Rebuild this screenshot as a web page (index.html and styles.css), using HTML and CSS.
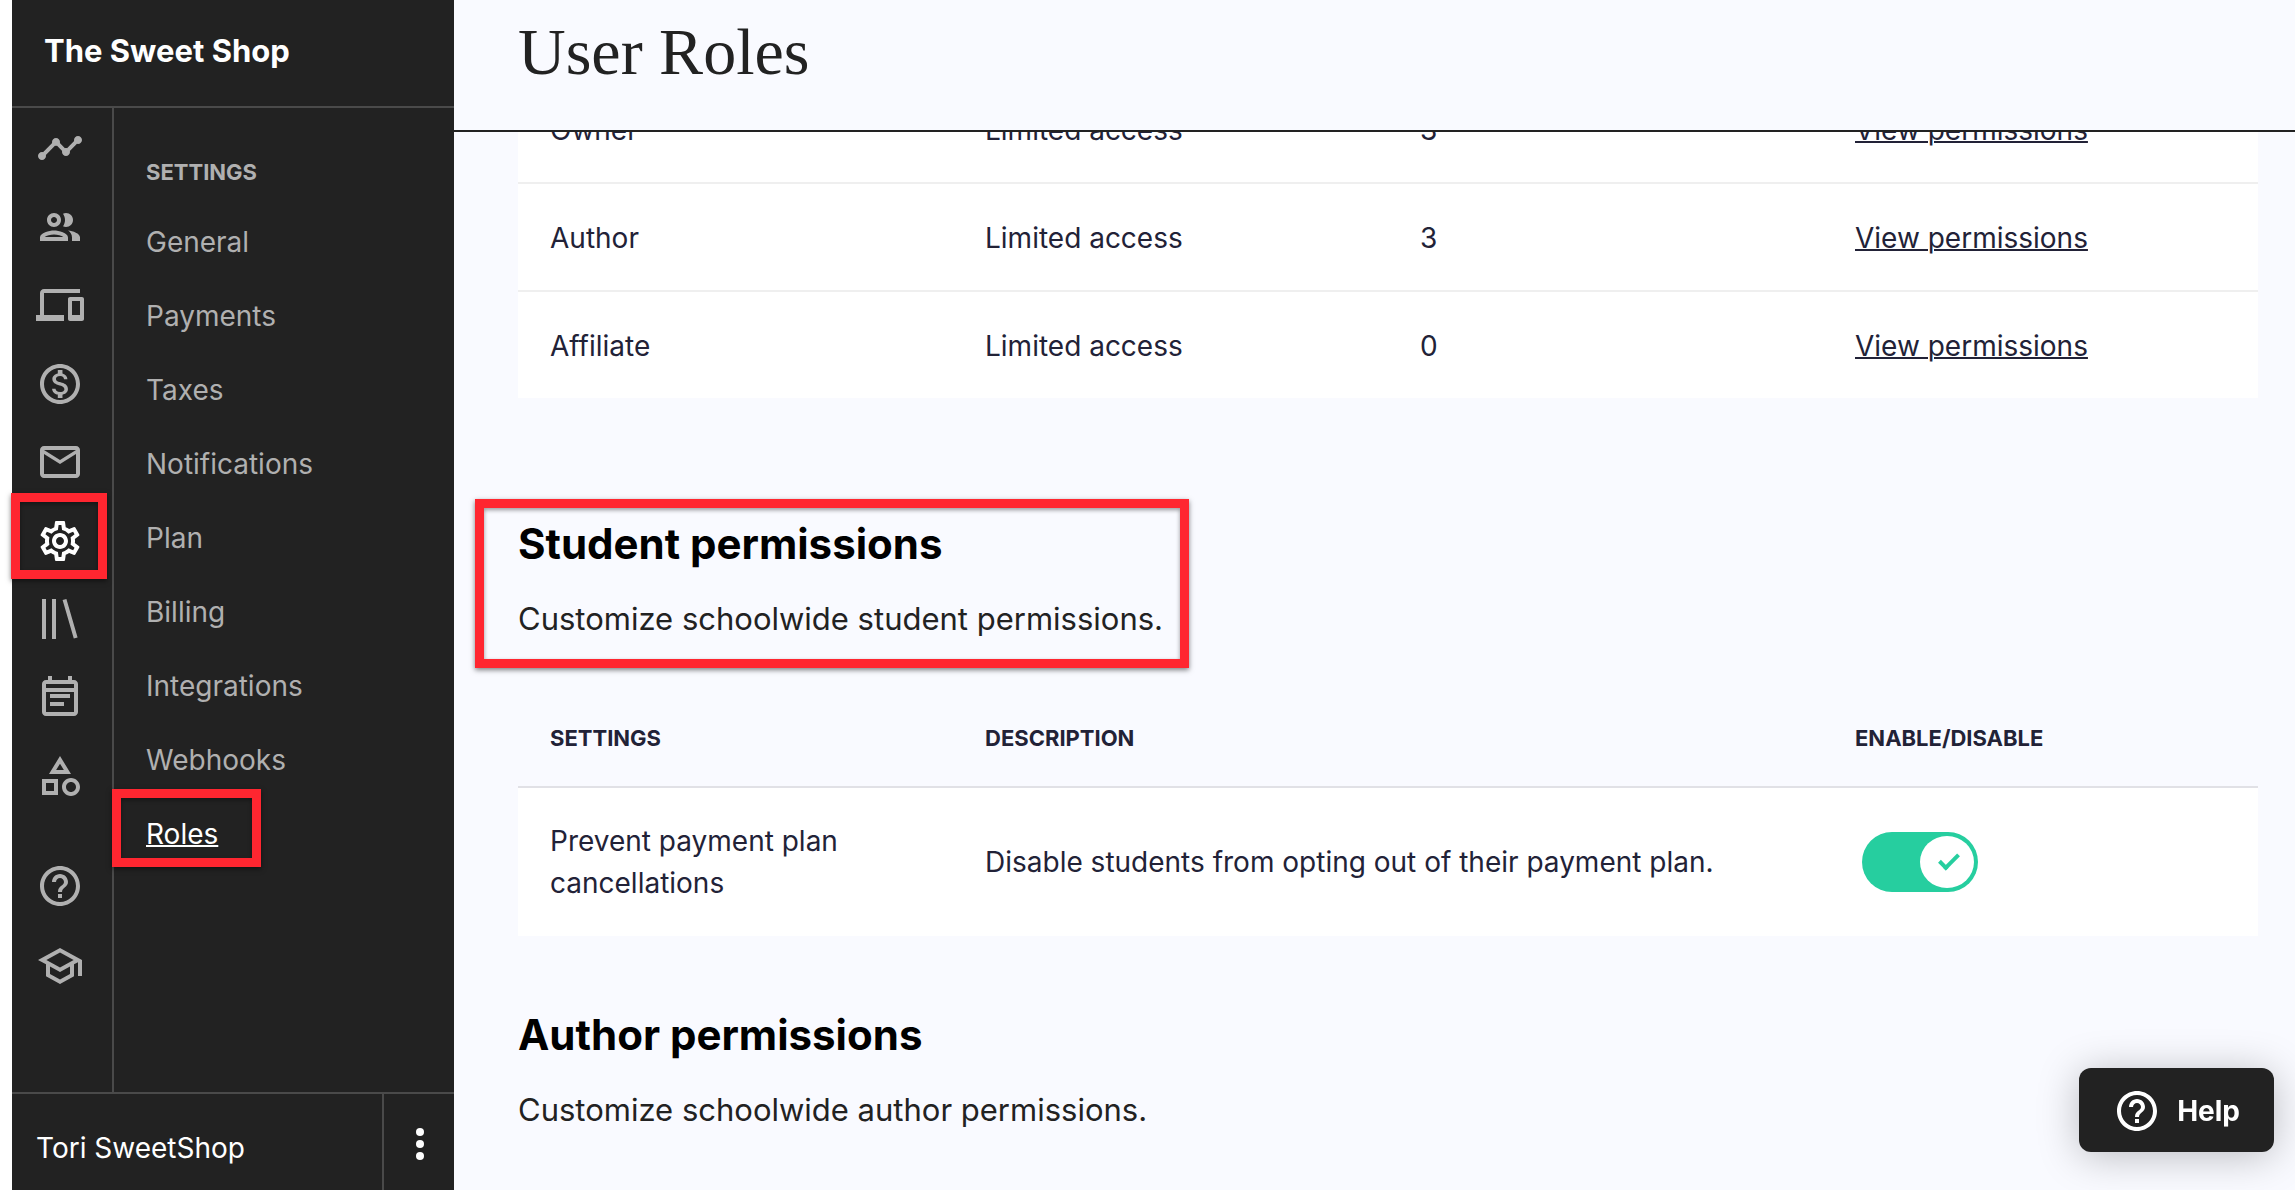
FILE: index.html
```html
<!DOCTYPE html>
<html lang="en">
<head>
    <meta charset="UTF-8">
    <meta name="viewport" content="width=device-width, initial-scale=1.0">
    <title>The Sweet Shop - User Roles</title>
    <link rel="stylesheet" href="styles.css">
</head>
<body>
    <aside class="sidebar">
        <div class="school-name">The Sweet Shop</div>
        <div class="sidebar-body">
            <nav class="rail" aria-label="Main">
                <div class="rail-main">
                    <a href="#" aria-label="Dashboard"><svg viewBox="0 0 24 24"><path d="M23 8c0 1.100-.9 2-2 2a1.700 1.700 0 0 1-.51-.07l-3.560 3.550c.05.16.07.34.07.52 0 1.100-.9 2-2 2s-2-.9-2-2c0-.18.02-.36.07-.52l-2.550-2.550c-.16.05-.34.07-.52.07s-.36-.02-.52-.07l-4.550 4.560c.05.16.07.33.07.51 0 1.100-.9 2-2 2s-2-.9-2-2 .9-2 2-2c.18 0 .35.02.51.07l4.560-4.550C8.020 9.360 8 9.180 8 9c0-1.100.9-2 2-2s2 .9 2 2c0 .18-.02.36-.07.52l2.550 2.550c.16-.05.34-.07.52-.07s.36.02.52.07l3.550-3.560A1.700 1.700 0 0 1 19 8c0-1.100.9-2 2-2s2 .9 2 2z"/></svg></a>
                    <a href="#" aria-label="Users"><svg viewBox="0 0 24 24"><path d="M9 13.750c-2.340 0-7 1.170-7 3.500V19h14v-1.750c0-2.330-4.660-3.500-7-3.500zM4.340 17c.84-.58 2.870-1.250 4.660-1.250s3.820.67 4.660 1.250H4.340zM9 12c1.930 0 3.500-1.570 3.500-3.500S10.930 5 9 5 5.500 6.570 5.500 8.500 7.070 12 9 12zm0-5c.83 0 1.500.67 1.500 1.500S9.830 10 9 10s-1.500-.67-1.500-1.500S8.170 7 9 7zm7.040 6.810c1.160.84 1.960 1.960 1.960 3.440V19h4v-1.750c0-2.020-3.500-3.170-5.960-3.440zM15 12c1.930 0 3.500-1.570 3.500-3.500S16.930 5 15 5c-.54 0-1.040.13-1.500.35.63.89 1 1.980 1 3.150s-.37 2.260-1 3.150c.46.22.96.35 1.500.35z"/></svg></a>
                    <a href="#" aria-label="Site"><svg viewBox="0 0 24 24"><path d="M4 6h18V4H4c-1.100 0-2 .9-2 2v11H0v3h14v-3H4V6zm19 2h-6c-.55 0-1 .45-1 1v10c0 .55.45 1 1 1h6c.55 0 1-.45 1-1V9c0-.55-.45-1-1-1zm-1 9h-4v-7h4v7z"/></svg></a>
                    <a href="#" aria-label="Sales"><svg viewBox="0 0 24 24"><path d="M12 2C6.480 2 2 6.480 2 12s4.480 10 10 10 10-4.480 10-10S17.520 2 12 2zm0 18c-4.410 0-8-3.590-8-8s3.590-8 8-8 8 3.590 8 8-3.590 8-8 8zm.31-8.860c-1.770-.45-2.340-.94-2.340-1.670 0-.84.79-1.430 2.100-1.430 1.380 0 1.900.66 1.940 1.640h1.710c-.05-1.340-.87-2.570-2.490-2.970V5H10.900v1.690c-1.510.32-2.720 1.300-2.720 2.810 0 1.790 1.490 2.690 3.660 3.210 1.950.46 2.340 1.150 2.340 1.870 0 .53-.39 1.390-2.100 1.390-1.600 0-2.230-.72-2.320-1.640H8.040c.1 1.700 1.360 2.660 2.860 2.970V19h2.340v-1.670c1.520-.29 2.720-1.160 2.730-2.770-.01-2.200-1.900-2.960-3.660-3.420z"/></svg></a>
                    <a href="#" aria-label="Emails"><svg viewBox="0 0 24 24"><path d="M22 6c0-1.100-.9-2-2-2H4c-1.100 0-2 .9-2 2v12c0 1.100.9 2 2 2h16c1.100 0 2-.9 2-2V6zm-2 0l-8 4.990L4 6h16zm0 12H4V8l8 5 8-5v10z"/></svg></a>
                    <a href="#" class="active" aria-label="Settings"><svg viewBox="0 0 24 24"><path d="M19.430 12.980c.04-.32.07-.64.07-.98 0-.34-.03-.66-.07-.98l2.110-1.650c.19-.15.24-.42.12-.64l-2-3.460c-.09-.16-.26-.25-.44-.25-.06 0-.12.01-.17.03l-2.490 1c-.52-.4-1.080-.73-1.690-.98l-.38-2.650C14.460 2.180 14.250 2 14 2h-4c-.25 0-.46.18-.49.42l-.38 2.650c-.61.25-1.170.59-1.690.98l-2.490-1c-.06-.02-.12-.03-.18-.03-.17 0-.34.09-.43.25l-2 3.460c-.13.22-.07.49.12.64l2.110 1.650c-.04.32-.07.65-.07.98 0 .33.03.66.07.98l-2.110 1.650c-.19.15-.24.42-.12.64l2 3.460c.09.16.26.25.44.25.06 0 .12-.01.17-.03l2.490-1c.52.4 1.080.73 1.690.98l.38 2.650c.03.24.24.42.49.42h4c.25 0 .46-.18.49-.42l.38-2.650c.61-.25 1.170-.59 1.690-.98l2.490 1c.06.02.12.03.18.03.17 0 .34-.09.43-.25l2-3.460c.12-.22.07-.49-.12-.64l-2.110-1.650zm-1.980-1.710c.04.31.05.52.05.73 0 .21-.02.43-.05.73l-.14 1.130.89.7 1.080.84-.7 1.210-1.270-.51-1.040-.42-.9.68c-.43.32-.84.56-1.250.73l-1.060.43-.16 1.130-.2 1.350h-1.400l-.19-1.350-.16-1.130-1.060-.43c-.43-.18-.83-.41-1.230-.71l-.91-.7-1.060.43-1.270.51-.7-1.210 1.080-.84.89-.7-.14-1.130c-.03-.31-.05-.54-.05-.74s.02-.43.05-.73l.14-1.130-.89-.7-1.080-.84.7-1.210 1.270.51 1.040.42.9-.68c.43-.32.84-.56 1.250-.73l1.060-.43.16-1.130.2-1.350h1.390l.19 1.350.16 1.130 1.060.43c.43.18.83.41 1.230.71l.91.7 1.060-.43 1.270-.51.7 1.210-1.070.85-.89.7.14 1.130zM12 8c-2.210 0-4 1.790-4 4s1.790 4 4 4 4-1.790 4-4-1.790-4-4-4zm0 6c-1.100 0-2-.9-2-2s.9-2 2-2 2 .9 2 2-.9 2-2 2z"/></svg></a>
                    <a href="#" aria-label="Library"><svg viewBox="0 0 24 24"><path d="M3 2h2v20H3zM8 2h2v20H8zM13.300 2.500l1.900-.5 5.600 19.300-1.900.5z"/></svg></a>
                    <a href="#" aria-label="Calendar"><svg viewBox="0 0 24 24"><path d="M17 10H7v2h10v-2zm2-7h-1V1h-2v2H8V1H6v2H5c-1.110 0-2 .9-2 2v14c0 1.100.89 2 2 2h14c1.100 0 2-.9 2-2V5c0-1.100-.9-2-2-2zm0 16H5V9h14v10zm0-12H5V5h14v2zm-5 7H7v2h7v-2z" /></svg></a>
                    <a href="#" aria-label="Apps"><svg viewBox="0 0 24 24"><path d="M12 2l-5.500 9h11L12 2zm0 3.840L13.930 9h-3.870L12 5.840zM17.500 13c-2.490 0-4.500 2.010-4.500 4.500s2.010 4.500 4.500 4.500 4.500-2.010 4.500-4.500-2.010-4.500-4.500-4.500zm0 7c-1.380 0-2.500-1.120-2.500-2.500s1.120-2.500 2.500-2.500 2.500 1.120 2.500 2.500-1.120 2.500-2.500 2.500zM3 21.500h8v-8H3v8zm2-6h4v4H5v-4z"/></svg></a>
                </div>
                <div class="rail-help">
                    <a href="#" aria-label="Help center"><svg viewBox="0 0 24 24"><path d="M11 18h2v-2h-2v2zm1-16C6.480 2 2 6.480 2 12s4.480 10 10 10 10-4.480 10-10S17.520 2 12 2zm0 18c-4.410 0-8-3.590-8-8s3.590-8 8-8 8 3.590 8 8-3.590 8-8 8zm0-14c-2.210 0-4 1.790-4 4h2c0-1.100.9-2 2-2s2 .9 2 2c0 2-3 1.750-3 5h2c0-2.250 3-2.500 3-5 0-2.210-1.790-4-4-4z"/></svg></a>
                    <a href="#" aria-label="Learn"><svg viewBox="0 0 24 24"><path d="M12 3L1 9l4 2.180v6L12 21l7-3.820v-6l2-1.090V17h2V9L12 3zm6.820 6L12 12.720 5.180 9 12 5.280 18.820 9zM17 15.990l-5 2.730-5-2.730v-3.720L12 15l5-2.730v3.720z"/></svg></a>
                </div>
            </nav>
            <nav class="menu" aria-label="Settings">
                <h2>SETTINGS</h2>
                <ul>
                    <li><a href="#">General</a></li>
                    <li><a href="#">Payments</a></li>
                    <li><a href="#">Taxes</a></li>
                    <li><a href="#">Notifications</a></li>
                    <li><a href="#">Plan</a></li>
                    <li><a href="#">Billing</a></li>
                    <li><a href="#">Integrations</a></li>
                    <li><a href="#">Webhooks</a></li>
                    <li><a href="#" class="current">Roles</a></li>
                </ul>
            </nav>
        </div>
        <div class="account">
            <a href="#" class="account-name">Tori SweetShop</a>
            <button type="button" class="account-more" aria-label="Account menu"><svg viewBox="0 0 24 24"><circle cx="12" cy="6" r="2"/><circle cx="12" cy="12" r="2"/><circle cx="12" cy="18" r="2"/></svg></button>
        </div>
    </aside>

    <main class="main">
        <header class="page-header">
            <h1>User Roles</h1>
        </header>
        <div class="content">
            <table class="roles">
                <tbody>
                    <tr><td>Owner</td><td>Limited access</td><td>3</td><td><a href="#">View permissions</a></td></tr>
                    <tr><td>Author</td><td>Limited access</td><td>3</td><td><a href="#">View permissions</a></td></tr>
                    <tr><td>Affiliate</td><td>Limited access</td><td>0</td><td><a href="#">View permissions</a></td></tr>
                </tbody>
            </table>

            <section class="student">
                <div class="section-intro highlighted">
                    <h2>Student permissions</h2>
                    <p>Customize schoolwide student permissions.</p>
                </div>
                <table class="permissions">
                    <thead>
                        <tr><th>SETTINGS</th><th colspan="2">DESCRIPTION</th><th>ENABLE/DISABLE</th></tr>
                    </thead>
                    <tbody>
                        <tr>
                            <td><label for="prevent-cancel">Prevent payment plan cancellations</label></td>
                            <td colspan="2">Disable students from opting out of their payment plan.</td>
                            <td><input type="checkbox" class="toggle" id="prevent-cancel" checked></td>
                        </tr>
                    </tbody>
                </table>
            </section>

            <section>
                <div class="section-intro">
                    <h2>Author permissions</h2>
                    <p>Customize schoolwide author permissions.</p>
                </div>
            </section>
        </div>
    </main>

    <button type="button" class="help-btn">
        <svg viewBox="0 0 24 24"><path d="M11 18h2v-2h-2v2zm1-16C6.480 2 2 6.480 2 12s4.480 10 10 10 10-4.480 10-10S17.520 2 12 2zm0 18c-4.410 0-8-3.590-8-8s3.590-8 8-8 8 3.590 8 8-3.590 8-8 8zm0-14c-2.210 0-4 1.790-4 4h2c0-1.100.9-2 2-2s2 .9 2 2c0 2-3 1.750-3 5h2c0-2.250 3-2.500 3-5 0-2.210-1.790-4-4-4z"/></svg>
        Help
    </button>
</body>
</html>
```
FILE: styles.css
```css
* {
    box-sizing: border-box;
}

body {
    font-family: Inter, "Liberation Sans", sans-serif;
    font-size: 28px;
    line-height: 42px;
    color: #222237;
    background-color: #fff;
    display: flex;
    height: 100vh;
    margin: 0;
    padding-left: 12px;
    overflow: hidden;
}

h1, h2, p, ul {
    margin: 0;
    padding: 0;
}

button {
    font-family: inherit;
    border: none;
    cursor: pointer;
}

svg {
    display: block;
    width: 48px;
    height: 48px;
    fill: currentColor;
}

/* Sidebar */
.sidebar {
    flex: none;
    width: 442px;
    display: flex;
    flex-direction: column;
    background-color: #222;
    color: #fff;
}

.school-name {
    height: 108px;
    padding: 30px 32px;
    border-bottom: 2px solid #4a4a4a;
    font-size: 31px;
    font-weight: 700;
}

.sidebar-body {
    flex: 1;
    display: flex;
    min-height: 0;
}

.rail {
    width: 102px;
    padding: 16px 28px 16px 24px;
    border-right: 2px solid #4a4a4a;
}

.rail a {
    position: relative;
    display: block;
    color: #b0b0b0;
}

.rail a.active {
    color: #fff;
}

.rail-main {
    display: flex;
    flex-direction: column;
    justify-content: space-between;
    height: 676px;
}

.rail-help {
    display: flex;
    flex-direction: column;
    gap: 32px;
    margin-top: 62px;
}

.menu {
    padding: 48px 32px;
}

.menu h2 {
    font-size: 22px;
    font-weight: 700;
    line-height: 32px;
    color: #b0b0b0;
}

.menu ul {
    list-style: none;
    padding-top: 17px;
}

.menu li {
    height: 74px;
    padding: 16px 0;
}

.menu a {
    position: relative;
    color: #b0b0b0;
    text-decoration: none;
}

.menu a.current {
    color: #fff;
    text-decoration: underline;
    text-decoration-thickness: 2px;
}

.account {
    display: flex;
    height: 98px;
    border-top: 2px solid #4a4a4a;
}

.account-name {
    flex: 1;
    padding: 33px 24px;
    color: #fff;
    text-decoration: none;
}

.account-more {
    width: 72px;
    padding: 4px 10px 0 12px;
    background: none;
    color: #fff;
    border-left: 2px solid #4a4a4a;
}

/* Red call-out boxes */
.rail a.active::after,
.menu a.current::after,
.highlighted::after {
    content: "";
    position: absolute;
    border: 9px solid #ff2630;
    box-shadow: 0 2px 5px rgba(0, 0, 0, 0.5), inset 0 2px 4px rgba(0, 0, 0, 0.4);
    pointer-events: none;
}

.rail a.active::after {
    inset: -24px -23px -14px -25px;
}

.menu a.current::after {
    inset: -28px -43px -16px -34px;
}

.highlighted::after {
    inset: -19px -26px -17px -43px;
}

/* Page */
.main {
    flex: 1;
    min-width: 0;
    overflow: hidden;
    background-color: #f9faff;
}

.page-header {
    position: relative;
    z-index: 1;
    height: 132px;
    padding: 12px 64px;
    background-color: #f9faff;
    border-bottom: 2px solid #222;
}

.page-header h1 {
    font-family: "Liberation Serif", serif;
    font-size: 66px;
    font-weight: 400;
    line-height: 80px;
    color: #222;
}

/* the list is scrolled part way under the header */
.content {
    margin-top: -56px;
    padding: 0 37px 0 64px;
}

table {
    width: 100%;
    table-layout: fixed;
    border-collapse: separate;
    border-spacing: 0;
}

th, td {
    padding: 32px;
    text-align: left;
}

tbody {
    background-color: #fff;
}

.roles td {
    padding-top: 33px;
    padding-bottom: 31px;
}

.roles tr:not(:last-child) td {
    border-bottom: 2px solid #efefef;
}

.roles a {
    color: inherit;
    text-decoration-thickness: 2px;
}

.student {
    padding-top: 48px;
}

.section-intro {
    position: relative;
    width: fit-content;
    padding-top: 73px;
}

.section-intro h2 {
    font-size: 42px;
    font-weight: 700;
    line-height: 52px;
    color: #000;
}

.section-intro p {
    padding-top: 17px;
    font-size: 31px;
    line-height: 64px;
    color: #222;
}

.highlighted {
    margin-top: 72px;
    padding-top: 0;
}

.permissions {
    margin-top: 39px;
}

.permissions th {
    border-bottom: 2px solid #e1e1e6;
    font-size: 22px;
    font-weight: 700;
    line-height: 32px;
}

.permissions td {
    padding-right: 64px;
}

.toggle {
    appearance: none;
    display: block;
    position: relative;
    width: 116px;
    height: 60px;
    margin: 0 0 0 7px;
    border-radius: 30px;
    background-color: #ccc;
    cursor: pointer;
}

.toggle:checked {
    background-color: #26ce9f;
}

.toggle::before {
    content: "";
    position: absolute;
    top: 4px;
    right: 4px;
    width: 54px;
    height: 52px;
    border-radius: 50%;
    background-color: #fff;
}

.toggle::after {
    content: "";
    position: absolute;
    top: 22px;
    right: 19px;
    width: 16px;
    height: 7px;
    border: solid #26ce9f;
    border-width: 0 0 4px 4px;
    transform: rotate(-45deg);
}

.help-btn {
    position: fixed;
    right: 21px;
    bottom: 38px;
    display: flex;
    align-items: center;
    gap: 16px;
    height: 84px;
    padding: 2px 34px 0;
    border-radius: 12px;
    background-color: #222;
    color: #fff;
    font-size: 28px;
    font-weight: 700;
    box-shadow: 0 4px 40px rgba(0, 0, 0, 0.25);
}
```
